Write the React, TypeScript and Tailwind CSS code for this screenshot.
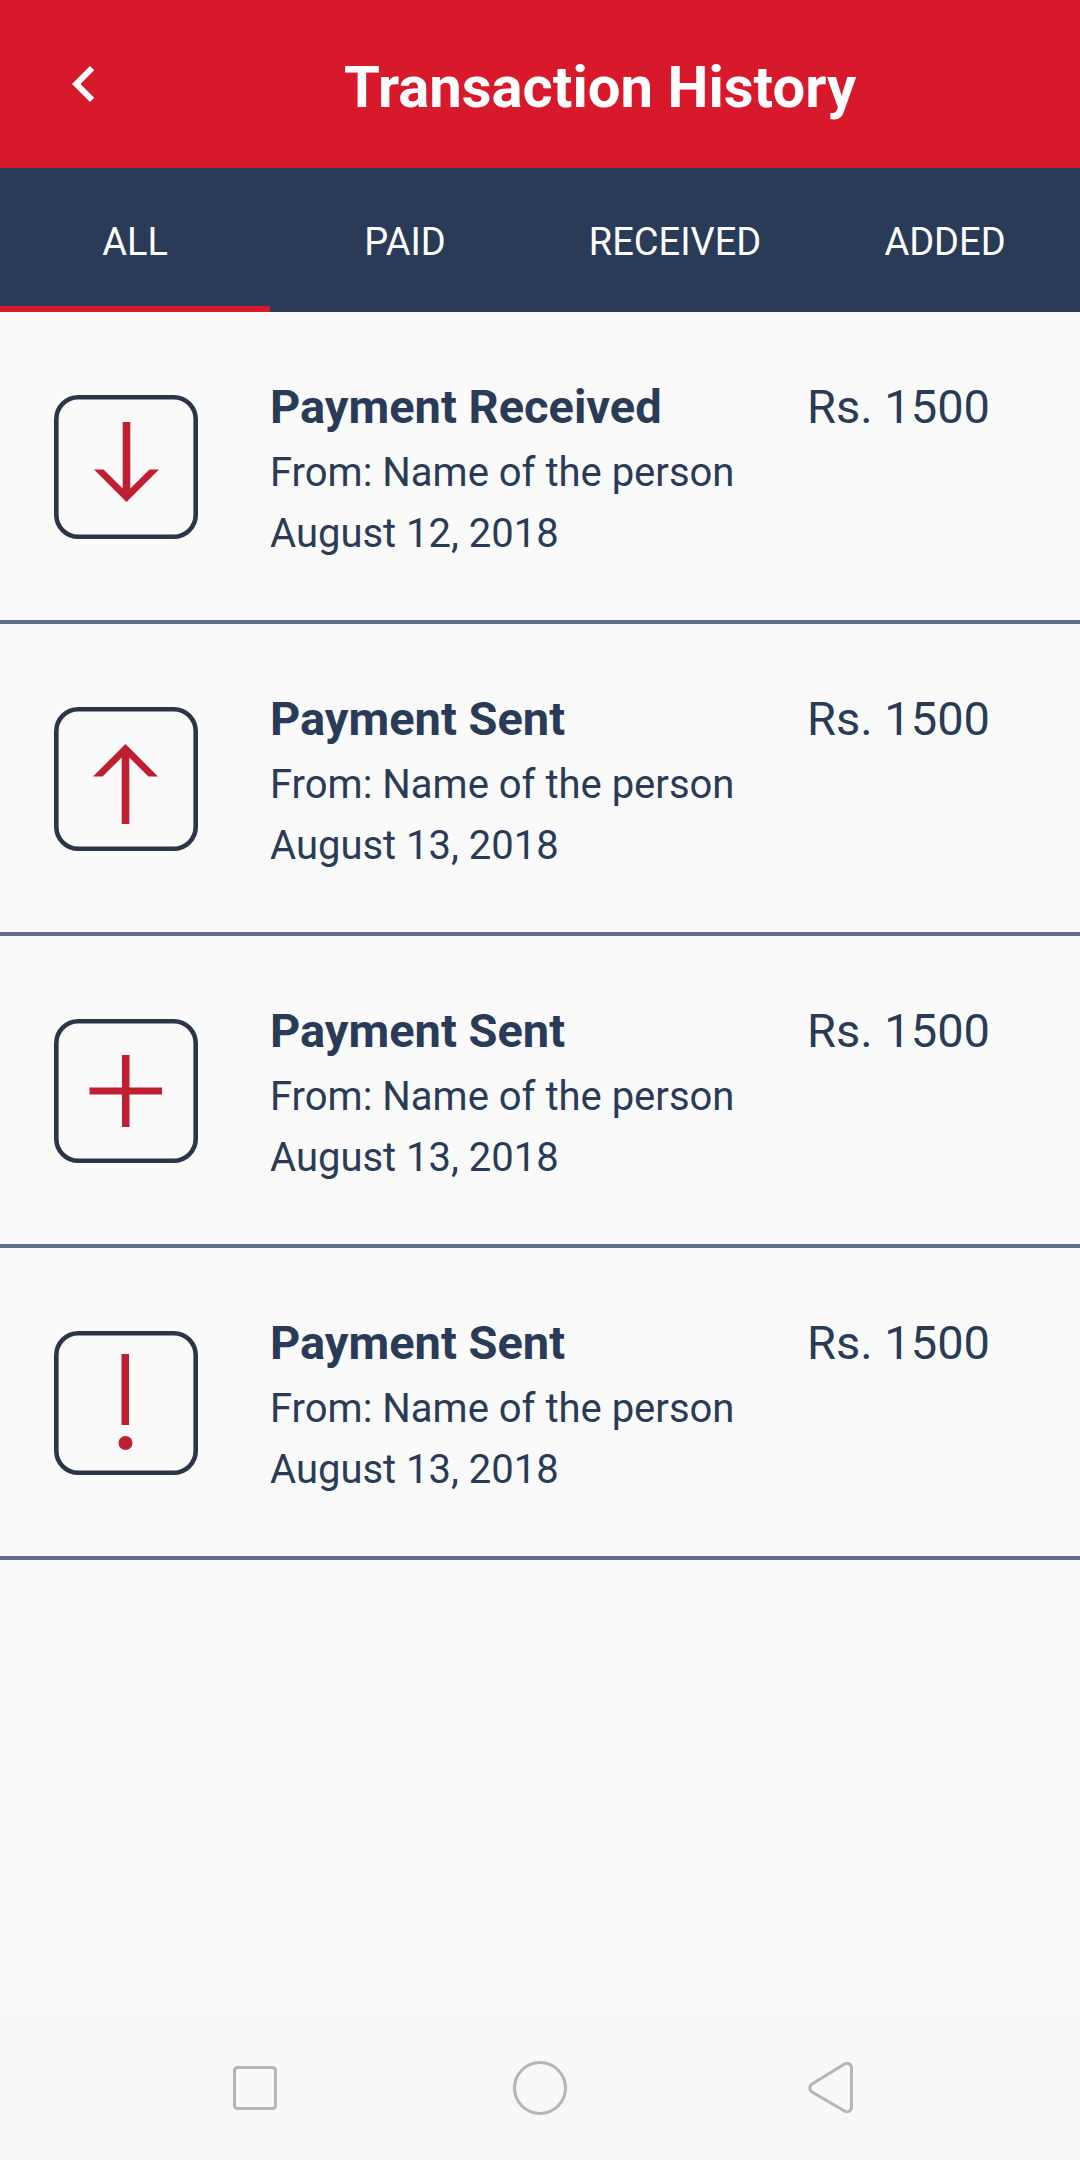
import { useState } from 'react'

type TxKind = 'received' | 'sent' | 'added' | 'alert'

interface Transaction {
  id: number
  kind: TxKind
  title: string
  from: string
  date: string
  amount: string
}

const TABS = ['ALL', 'PAID', 'RECEIVED', 'ADDED']

const TRANSACTIONS: Transaction[] = [
  { id: 1, kind: 'received', title: 'Payment Received', from: 'From: Name of the person', date: 'August 12, 2018', amount: 'Rs. 1500' },
  { id: 2, kind: 'sent', title: 'Payment Sent', from: 'From: Name of the person', date: 'August 13, 2018', amount: 'Rs. 1500' },
  { id: 3, kind: 'added', title: 'Payment Sent', from: 'From: Name of the person', date: 'August 13, 2018', amount: 'Rs. 1500' },
  { id: 4, kind: 'alert', title: 'Payment Sent', from: 'From: Name of the person', date: 'August 13, 2018', amount: 'Rs. 1500' },
]

function TxIcon({ kind }: { kind: TxKind }) {
  return (
    <svg viewBox="0 0 144 144" className="size-36" fill="#c01f32" aria-hidden="true">
      <rect x="2.3" y="2.3" width="139.4" height="139.4" rx="22" fill="none" stroke="#2b3648" strokeWidth="4.6" />
      {kind === 'received' && <path d="M68.7 27h7.6v66.500L95.500 74.500h9.500L72.500 107 40 74.500h9.500L68.700 93.500z" />}
      {kind === 'sent' && <path d="M67.700 117h7.600V50.500L94.500 69.500h9.500L71.500 37 39 69.500h9.500L67.700 50.500z" />}
      {kind === 'added' && <path d="M68 36h7.500v32.500H108v7H75.500V108H68V75.500H35.500v-7H68z" />}
      {kind === 'alert' && (
        <>
          <path d="M67.500 23H75v71h-7.500z" />
          <circle cx="71.500" cy="112" r="7" />
        </>
      )}
    </svg>
  )
}

function TransactionRow({ tx }: { tx: Transaction }) {
  return (
    <li className="flex min-h-[312px] items-start border-b-4 border-[#626e84] pt-[63px] pr-[90px]">
      <div className="mt-5 w-[270px] flex-none pl-[54px]">
        <TxIcon kind={tx.kind} />
      </div>
      <div className="flex-1">
        <h2 className="mb-[3px] text-[47px] leading-[64px] font-bold">{tx.title}</h2>
        <p className="text-[40px] leading-[61px]">{tx.from}</p>
        <p className="text-[40px] leading-[61px]">{tx.date}</p>
      </div>
      <span className="flex-none text-[47px] leading-[64px]">{tx.amount}</span>
    </li>
  )
}

export default function App() {
  const [activeTab, setActiveTab] = useState('ALL')

  return (
    <div className="flex min-h-screen flex-col bg-[#fafafa] font-['Roboto',sans-serif] text-[#2a3b57]">
      <header className="flex items-center bg-[#d8182b] py-12 pl-12 text-white">
        <button type="button" aria-label="Back" className="flex-none">
          <svg viewBox="0 0 24 24" className="size-[72px]" fill="currentColor">
            <path d="M15.410 7.410 14 6l-6 6 6 6 1.410-1.410L10.830 12z" />
          </svg>
        </button>
        <h1 className="flex-1 pt-1.5 text-center text-[58px] leading-[66px] font-bold">Transaction History</h1>
      </header>

      <nav className="grid grid-cols-4 bg-[#2a3b57]">
        {TABS.map((tab) => (
          <button
            key={tab}
            type="button"
            onClick={() => setActiveTab(tab)}
            className={`h-36 border-b-6 pt-2.5 text-[38px] text-white ${
              activeTab === tab ? 'border-[#d8182b]' : 'border-transparent'
            }`}
          >
            {tab}
          </button>
        ))}
      </nav>

      <main className="flex-1">
        <ul>
          {TRANSACTIONS.map((tx) => (
            <TransactionRow key={tx.id} tx={tx} />
          ))}
        </ul>
      </main>

      {/* system navigation */}
      <footer className="flex h-36 items-center justify-center gap-[225px] bg-[#f8f8f8] text-[#b5b5b5]">
        <button type="button" aria-label="Recent apps">
          <svg viewBox="0 0 60 60" className="size-[60px]" fill="none" stroke="currentColor" strokeWidth="3">
            <rect x="9.5" y="9.5" width="41" height="41" rx="3" />
          </svg>
        </button>
        <button type="button" aria-label="Home">
          <svg viewBox="0 0 60 60" className="size-[60px]" fill="none" stroke="currentColor" strokeWidth="3">
            <circle cx="30" cy="30" r="25.5" />
          </svg>
        </button>
        <button type="button" aria-label="Back to previous app">
          <svg viewBox="0 0 60 60" className="size-[60px]" fill="none" stroke="currentColor" strokeWidth="3">
            <path d="M56.500 10v39c0 4-4 6-7 4L17 34c-3-2-3-6 0-8L49.500 6c3-2 7 0 7 4z" />
          </svg>
        </button>
      </footer>
    </div>
  )
}
